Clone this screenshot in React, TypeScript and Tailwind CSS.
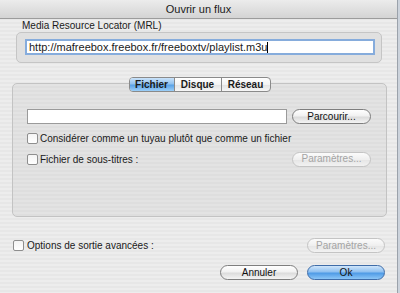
const stripes =
  'bg-[repeating-linear-gradient(180deg,#ededed_0px,#ededed_2px,#e7e7e7_2px,#e7e7e7_4px)]';

const AquaButton = ({
  label,
  width,
  disabled = false,
  primary = false,
}: {
  label: string;
  width: string;
  disabled?: boolean;
  primary?: boolean;
}) => {
  let cls =
    'flex items-center justify-center h-[15px] rounded-full border text-[10px] leading-none ';
  if (primary) {
    cls +=
      'border-[#3f6ca8] bg-[linear-gradient(180deg,#cfe6fb_0%,#8fc0f0_45%,#4f9be6_55%,#8cc6f7_100%)] text-[#111]';
  } else if (disabled) {
    cls +=
      'border-[#c4c4c4] bg-[linear-gradient(180deg,#fbfbfb_0%,#efefef_50%,#e6e6e6_55%,#f2f2f2_100%)] text-[#a4a4a4]';
  } else {
    cls +=
      'border-[#7e7e7e] bg-[linear-gradient(180deg,#ffffff_0%,#f1f1f1_45%,#dcdcdc_55%,#f4f4f4_100%)] text-[#111]';
  }
  return (
    <div className={`${cls} ${width}`}>
      <span>{label}</span>
    </div>
  );
};

const Checkbox = () => (
  <div className="w-[11px] h-[11px] shrink-0 rounded-[2px] border border-[#8e8e8e] bg-[linear-gradient(180deg,#f4f4f4,#ffffff)]" />
);

const App = () => {
  return (
    <div className="flex w-[400px] h-[293px] overflow-hidden font-['Liberation_Sans',Arial,sans-serif] text-[#1a1a1a]">
      <div className={`w-[397px] h-full flex flex-col ${stripes}`}>
        {/* Title bar */}
        <div className="h-[19px] shrink-0 flex items-center justify-center border-b border-[#9c9c9c] bg-[linear-gradient(180deg,#ececec,#d4d4d4)] text-[11px]">
          Ouvrir un flux
        </div>

        {/* MRL */}
        <div className="mt-[1px] pl-[22px] text-[10px] leading-[12px]">Media Resource Locator (MRL)</div>
        <div className="ml-[16px] w-[366px] h-[31px] shrink-0 rounded-[5px] border border-[#c5c5c5] bg-[#e0e0e0] pl-[8px] pt-[6px]">
          <div className="w-[350px] h-[16px] border-2 border-[#86acdc] bg-white flex items-center pl-[2px] text-[11px]">
            http://mafreebox.freebox.fr/freeboxtv/playlist.m3u
            <span className="w-px h-[11px] bg-black" />
          </div>
        </div>

        {/* Tabs */}
        <div className="mt-[14px] ml-[12px] w-[375px] h-[15px] flex justify-center relative z-10">
          <div className="flex h-[15px] rounded-[4px] border border-[#8a8a8a] overflow-hidden text-[10px] font-bold bg-[linear-gradient(180deg,#ffffff_0%,#f3f3f3_50%,#e4e4e4_55%,#f6f6f6_100%)]">
            <div className="w-[45px] flex items-center justify-center border-r border-[#8a8a8a] bg-[linear-gradient(180deg,#c9e2fa_0%,#92c2ef_45%,#5aa2e6_55%,#9ccff8_100%)]">
              Fichier
            </div>
            <div className="w-[47px] flex items-center justify-center border-r border-[#8a8a8a]">Disque</div>
            <div className="w-[48px] flex items-center justify-center">Réseau</div>
          </div>
        </div>

        {/* Tab panel */}
        <div className="mt-[-9px] ml-[12px] w-[375px] h-[134px] shrink-0 rounded-[5px] border border-[#c3c3c3] bg-[repeating-linear-gradient(180deg,#e3e3e3_0px,#e3e3e3_2px,#dedede_2px,#dedede_4px)] pl-[14px] pt-[25px] text-[10px]">
          <div className="w-[344px] flex items-center justify-between">
            <div className="w-[260px] h-[15px] border border-[#9a9a9a] bg-white" />
            <AquaButton label="Parcourir..." width="w-[79px]" />
          </div>
          <div className="mt-[9px] h-[11px] flex items-center gap-[2px]">
            <Checkbox />
            <span>Considérer comme un tuyau plutôt que comme un fichier</span>
          </div>
          <div className="mt-[8px] w-[344px] h-[14px] flex items-center justify-between">
            <div className="flex items-center gap-[2px]">
              <Checkbox />
              <span>Fichier de sous-titres :</span>
            </div>
            <AquaButton label="Paramètres..." width="w-[79px]" disabled />
          </div>
        </div>

        {/* Output options */}
        <div className="mt-[21px] ml-[13px] w-[372px] h-[15px] flex items-center justify-between text-[10px]">
          <div className="flex items-center gap-[3px]">
            <Checkbox />
            <span>Options de sortie avancées :</span>
          </div>
          <AquaButton label="Paramètres..." width="w-[78px]" disabled />
        </div>

        {/* Dialog buttons */}
        <div className="mt-[12px] w-[385px] h-[15px] flex justify-end gap-[9px]">
          <AquaButton label="Annuler" width="w-[78px]" />
          <AquaButton label="Ok" width="w-[78px]" primary />
        </div>
      </div>
      <div className="w-[3px] h-full border-l border-[#9ba2ab] bg-[#ccd3dc]" />
    </div>
  );
};

export default App;
